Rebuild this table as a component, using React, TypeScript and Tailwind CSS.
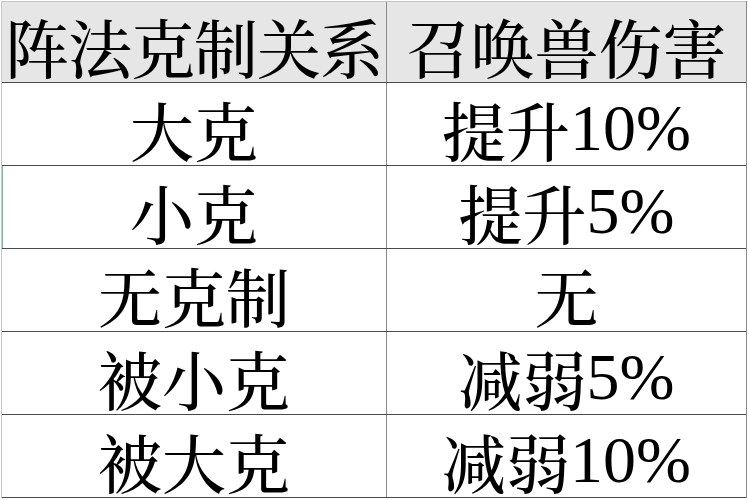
import React from "react";

const rows: [string, string, string][] = [
  ["大克", "提升", "10%"],
  ["小克", "提升", "5%"],
  ["无克制", "无", ""],
  ["被小克", "减弱", "5%"],
  ["被大克", "减弱", "10%"],
];

const font = {
  fontFamily:
    '"Noto Serif CJK SC", "Noto Serif SC", "Noto Sans CJK SC", serif',
};

export default function App() {
  return (
    <div className="w-[749px] h-[500px] bg-white pt-[1px] pl-[1px]" style={font}>
      <div className="w-[746px] border-l border-l-[#c8c8c8] border-r border-r-[#8a8a8a]">
        <div className="flex h-[82px] bg-[#e6e6e6] border-t border-t-[#c4c4c4] border-b border-b-[#4a4a4a]">
          <div className="w-[385px] border-r border-r-[#8a8a8a] flex items-center justify-center text-[64px] leading-none font-medium text-black pt-[6px] tracking-[-1px]">
            阵法克制关系
          </div>
          <div className="flex-1 flex items-center justify-center text-[64px] leading-none font-medium text-black pt-[6px]">
            召唤兽伤害
          </div>
        </div>
        {rows.map(([a, b, c], i) => (
          <div key={i} className="flex h-[83px] border-b border-b-[#4a4a4a]">
            <div
              className={
                "w-[385px] border-r border-r-[#8a8a8a] flex items-center justify-center text-[64px] leading-none font-medium text-black pt-[8px]" +
                (i === 1 ? " shadow-[inset_1px_0_0_#6cc39a]" : "")
              }
            >
              <span>{a}</span>
            </div>
            <div className="flex-1 flex items-center justify-center text-[64px] leading-none font-medium text-black pt-[8px]">
              <span>{b}</span>
              {c && (
                <span className="font-['Liberation_Serif',serif] font-normal text-[66px] leading-none">
                  {c}
                </span>
              )}
            </div>
          </div>
        ))}
      </div>
    </div>
  );
}
